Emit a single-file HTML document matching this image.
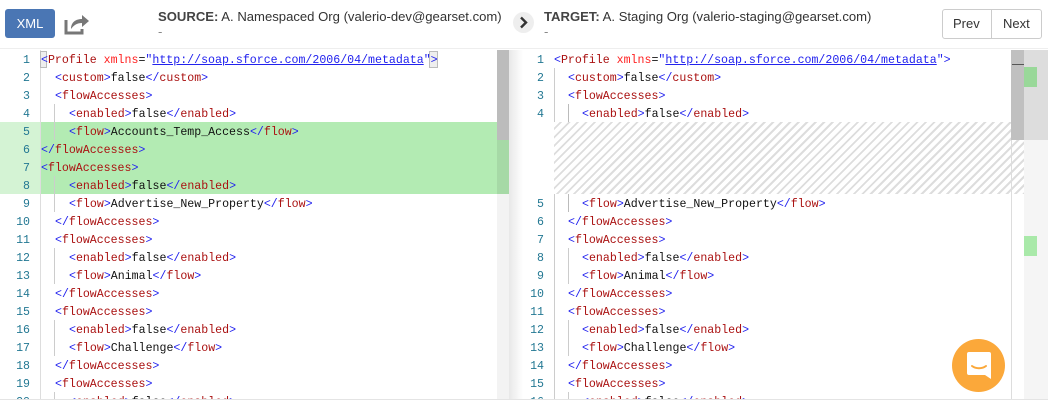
<!DOCTYPE html>
<html><head><meta charset="utf-8"><style>
*{margin:0;padding:0;box-sizing:border-box}
body{width:1048px;height:407px;overflow:hidden;background:#fff;font-family:"Liberation Sans",sans-serif;position:relative}
.abs{position:absolute}
.hdr{font-size:13.1px;color:#333}
.hdr b{color:#444}
.ln{position:absolute;height:18px;line-height:18px;padding-top:2px;font-family:"Liberation Mono",monospace;font-size:11.6px;white-space:pre;color:#111}
.num{position:absolute;width:30px;text-align:right;height:18px;line-height:18px;padding-top:2px;font-family:"Liberation Mono",monospace;font-size:11.6px;color:#237893}
.b{color:#2222ee}.t{color:#a11}.a{color:#f22}.s{color:#22e;text-decoration:underline}
.g{position:absolute;width:1px;background:#ccc}
</style></head><body>
<!-- header -->
<div class="abs" style="left:5px;top:9px;width:50px;height:29px;background:#4a76b4;border-radius:3px;color:#fff;font-size:13px;text-align:center;line-height:29px">XML</div>
<svg class="abs" style="left:64px;top:12px" width="26" height="24" viewBox="0 0 26 24"><path d="M2 8v13h16v-4" fill="none" stroke="#777" stroke-width="3"/><path d="M7 17c0-7 5-10 11-10V3l7 6-7 6v-4c-5 0-8 2-11 6z" fill="#777"/></svg>
<div class="abs hdr" style="left:158px;top:9px"><b>SOURCE:</b> A. Namespaced Org (valerio-dev@gearset.com)</div>
<div class="abs hdr" style="left:158px;top:24px;color:#888">-</div>
<div class="abs" style="left:513px;top:12px;width:21px;height:21px;border-radius:50%;background:#eee"></div>
<svg class="abs" style="left:518px;top:16px" width="12" height="13" viewBox="0 0 12 13"><path d="M3 1.5l5 5-5 5" fill="none" stroke="#333" stroke-width="2.4"/></svg>
<div class="abs hdr" style="left:544px;top:9px"><b>TARGET:</b> A. Staging Org (valerio-staging@gearset.com)</div>
<div class="abs hdr" style="left:544px;top:24px;color:#888">-</div>
<div class="abs" style="left:942px;top:9px;width:100px;height:30px;border:1px solid #ccc;border-radius:3px;font-size:13px;color:#333;line-height:28px">
<span class="abs" style="left:10px">Prev</span><span class="abs" style="left:48px;top:0;width:1px;height:28px;background:#ccc"></span><span class="abs" style="left:60px">Next</span></div>
<div class="abs" style="left:0;top:48px;width:1048px;height:1px;background:#eee"></div>
<!-- left pane -->
<div class="abs" style="left:0;top:122px;width:40px;height:72px;background:#d4f3d4"></div>
<div class="abs" style="left:40px;top:122px;width:470px;height:72px;background:#b3ebb3"></div>
<div class="g" style="left:40px;top:50px;height:349px;background:#ddd"></div>
<div class="abs" style="left:497px;top:50px;width:12px;height:72px;background:#f3f3f3"></div>
<div class="abs" style="left:497px;top:122px;width:12px;height:72px;background:#a6d9a6"></div>
<div class="abs" style="left:497px;top:194px;width:12px;height:205px;background:#f3f3f3"></div>
<div class="abs" style="left:497px;top:50px;width:12px;height:90px;background:#bcbcbc"></div>
<div class="abs" style="left:509px;top:50px;width:14px;height:349px;background:linear-gradient(90deg,#e8e8e8,#fff)"></div>
<div class="g" style="left:54px;top:104px;height:36px"></div>
<div class="g" style="left:54px;top:176px;height:36px"></div>
<div class="g" style="left:54px;top:248px;height:36px"></div>
<div class="g" style="left:54px;top:320px;height:36px"></div>
<div class="g" style="left:54px;top:392px;height:7px"></div>
<div class="abs" style="left:40px;top:51px;width:7px;height:17px;border:1px solid #bbb;background:#eee"></div>
<div class="abs" style="left:429px;top:51px;width:9px;height:17px;border:1px solid #bbb;background:#eee"></div>

<div class="num" style="left:0;top:50px">1</div><div class="ln" style="left:41px;top:50px"><span class="b">&lt;</span><span class="t">Profile</span> <span class="a">xmlns</span>=<span class="b">"</span><span class="s">http://soap.sforce.com/2006/04/metadata</span><span class="b">"&gt;</span></div>
<div class="num" style="left:0;top:68px">2</div><div class="ln" style="left:55px;top:68px"><span class="b">&lt;</span><span class="t">custom</span><span class="b">&gt;</span>false<span class="b">&lt;/</span><span class="t">custom</span><span class="b">&gt;</span></div>
<div class="num" style="left:0;top:86px">3</div><div class="ln" style="left:55px;top:86px"><span class="b">&lt;</span><span class="t">flowAccesses</span><span class="b">&gt;</span></div>
<div class="num" style="left:0;top:104px">4</div><div class="ln" style="left:69px;top:104px"><span class="b">&lt;</span><span class="t">enabled</span><span class="b">&gt;</span>false<span class="b">&lt;/</span><span class="t">enabled</span><span class="b">&gt;</span></div>
<div class="num" style="left:0;top:122px">5</div><div class="ln" style="left:69px;top:122px"><span class="b">&lt;</span><span class="t">flow</span><span class="b">&gt;</span>Accounts_Temp_Access<span class="b">&lt;/</span><span class="t">flow</span><span class="b">&gt;</span></div>
<div class="num" style="left:0;top:140px">6</div><div class="ln" style="left:41px;top:140px"><span class="b">&lt;/</span><span class="t">flowAccesses</span><span class="b">&gt;</span></div>
<div class="num" style="left:0;top:158px">7</div><div class="ln" style="left:41px;top:158px"><span class="b">&lt;</span><span class="t">flowAccesses</span><span class="b">&gt;</span></div>
<div class="num" style="left:0;top:176px">8</div><div class="ln" style="left:69px;top:176px"><span class="b">&lt;</span><span class="t">enabled</span><span class="b">&gt;</span>false<span class="b">&lt;/</span><span class="t">enabled</span><span class="b">&gt;</span></div>
<div class="num" style="left:0;top:194px">9</div><div class="ln" style="left:69px;top:194px"><span class="b">&lt;</span><span class="t">flow</span><span class="b">&gt;</span>Advertise_New_Property<span class="b">&lt;/</span><span class="t">flow</span><span class="b">&gt;</span></div>
<div class="num" style="left:0;top:212px">10</div><div class="ln" style="left:55px;top:212px"><span class="b">&lt;/</span><span class="t">flowAccesses</span><span class="b">&gt;</span></div>
<div class="num" style="left:0;top:230px">11</div><div class="ln" style="left:55px;top:230px"><span class="b">&lt;</span><span class="t">flowAccesses</span><span class="b">&gt;</span></div>
<div class="num" style="left:0;top:248px">12</div><div class="ln" style="left:69px;top:248px"><span class="b">&lt;</span><span class="t">enabled</span><span class="b">&gt;</span>false<span class="b">&lt;/</span><span class="t">enabled</span><span class="b">&gt;</span></div>
<div class="num" style="left:0;top:266px">13</div><div class="ln" style="left:69px;top:266px"><span class="b">&lt;</span><span class="t">flow</span><span class="b">&gt;</span>Animal<span class="b">&lt;/</span><span class="t">flow</span><span class="b">&gt;</span></div>
<div class="num" style="left:0;top:284px">14</div><div class="ln" style="left:55px;top:284px"><span class="b">&lt;/</span><span class="t">flowAccesses</span><span class="b">&gt;</span></div>
<div class="num" style="left:0;top:302px">15</div><div class="ln" style="left:55px;top:302px"><span class="b">&lt;</span><span class="t">flowAccesses</span><span class="b">&gt;</span></div>
<div class="num" style="left:0;top:320px">16</div><div class="ln" style="left:69px;top:320px"><span class="b">&lt;</span><span class="t">enabled</span><span class="b">&gt;</span>false<span class="b">&lt;/</span><span class="t">enabled</span><span class="b">&gt;</span></div>
<div class="num" style="left:0;top:338px">17</div><div class="ln" style="left:69px;top:338px"><span class="b">&lt;</span><span class="t">flow</span><span class="b">&gt;</span>Challenge<span class="b">&lt;/</span><span class="t">flow</span><span class="b">&gt;</span></div>
<div class="num" style="left:0;top:356px">18</div><div class="ln" style="left:55px;top:356px"><span class="b">&lt;/</span><span class="t">flowAccesses</span><span class="b">&gt;</span></div>
<div class="num" style="left:0;top:374px">19</div><div class="ln" style="left:55px;top:374px"><span class="b">&lt;</span><span class="t">flowAccesses</span><span class="b">&gt;</span></div>
<div class="num" style="left:0;top:392px">20</div><div class="ln" style="left:69px;top:392px"><span class="b">&lt;</span><span class="t">enabled</span><span class="b">&gt;</span>false<span class="b">&lt;/</span><span class="t">enabled</span><span class="b">&gt;</span></div>

<!-- right pane -->
<div class="abs" style="left:554px;top:122px;width:470px;height:72px;background:repeating-linear-gradient(135deg,#fff 0 4px,#ddd 4px 6px)"></div>
<div class="g" style="left:554px;top:68px;height:54px"></div>
<div class="g" style="left:554px;top:194px;height:205px"></div>
<div class="g" style="left:568px;top:104px;height:18px;background:#bbb"></div>
<div class="g" style="left:568px;top:194px;height:18px;background:#bbb"></div>
<div class="g" style="left:568px;top:248px;height:36px"></div>
<div class="g" style="left:568px;top:320px;height:36px"></div>
<div class="g" style="left:568px;top:392px;height:7px"></div>
<div class="abs" style="left:1011px;top:50px;width:1px;height:349px;background:#ddd"></div>
<div class="abs" style="left:1011px;top:50px;width:13px;height:90px;background:#c0c0c0"></div>
<div class="abs" style="left:1012px;top:64px;width:12px;height:1px;background:#555"></div>
<div class="abs" style="left:1024px;top:50px;width:24px;height:349px;background:#f5f5f5"></div>
<div class="abs" style="left:1024px;top:50px;width:24px;height:90px;background:#ddd"></div>
<div class="abs" style="left:1024px;top:67px;width:13px;height:20px;background:#99d899"></div>
<div class="abs" style="left:1024px;top:236px;width:13px;height:20px;background:#a9e9a9"></div>

<div class="num" style="left:514px;top:50px">1</div><div class="ln" style="left:554px;top:50px"><span class="b">&lt;</span><span class="t">Profile</span> <span class="a">xmlns</span>=<span class="b">"</span><span class="s">http://soap.sforce.com/2006/04/metadata</span><span class="b">"&gt;</span></div>
<div class="num" style="left:514px;top:68px">2</div><div class="ln" style="left:568px;top:68px"><span class="b">&lt;</span><span class="t">custom</span><span class="b">&gt;</span>false<span class="b">&lt;/</span><span class="t">custom</span><span class="b">&gt;</span></div>
<div class="num" style="left:514px;top:86px">3</div><div class="ln" style="left:568px;top:86px"><span class="b">&lt;</span><span class="t">flowAccesses</span><span class="b">&gt;</span></div>
<div class="num" style="left:514px;top:104px">4</div><div class="ln" style="left:582px;top:104px"><span class="b">&lt;</span><span class="t">enabled</span><span class="b">&gt;</span>false<span class="b">&lt;/</span><span class="t">enabled</span><span class="b">&gt;</span></div>
<div class="num" style="left:514px;top:194px">5</div><div class="ln" style="left:582px;top:194px"><span class="b">&lt;</span><span class="t">flow</span><span class="b">&gt;</span>Advertise_New_Property<span class="b">&lt;/</span><span class="t">flow</span><span class="b">&gt;</span></div>
<div class="num" style="left:514px;top:212px">6</div><div class="ln" style="left:568px;top:212px"><span class="b">&lt;/</span><span class="t">flowAccesses</span><span class="b">&gt;</span></div>
<div class="num" style="left:514px;top:230px">7</div><div class="ln" style="left:568px;top:230px"><span class="b">&lt;</span><span class="t">flowAccesses</span><span class="b">&gt;</span></div>
<div class="num" style="left:514px;top:248px">8</div><div class="ln" style="left:582px;top:248px"><span class="b">&lt;</span><span class="t">enabled</span><span class="b">&gt;</span>false<span class="b">&lt;/</span><span class="t">enabled</span><span class="b">&gt;</span></div>
<div class="num" style="left:514px;top:266px">9</div><div class="ln" style="left:582px;top:266px"><span class="b">&lt;</span><span class="t">flow</span><span class="b">&gt;</span>Animal<span class="b">&lt;/</span><span class="t">flow</span><span class="b">&gt;</span></div>
<div class="num" style="left:514px;top:284px">10</div><div class="ln" style="left:568px;top:284px"><span class="b">&lt;/</span><span class="t">flowAccesses</span><span class="b">&gt;</span></div>
<div class="num" style="left:514px;top:302px">11</div><div class="ln" style="left:568px;top:302px"><span class="b">&lt;</span><span class="t">flowAccesses</span><span class="b">&gt;</span></div>
<div class="num" style="left:514px;top:320px">12</div><div class="ln" style="left:582px;top:320px"><span class="b">&lt;</span><span class="t">enabled</span><span class="b">&gt;</span>false<span class="b">&lt;/</span><span class="t">enabled</span><span class="b">&gt;</span></div>
<div class="num" style="left:514px;top:338px">13</div><div class="ln" style="left:582px;top:338px"><span class="b">&lt;</span><span class="t">flow</span><span class="b">&gt;</span>Challenge<span class="b">&lt;/</span><span class="t">flow</span><span class="b">&gt;</span></div>
<div class="num" style="left:514px;top:356px">14</div><div class="ln" style="left:568px;top:356px"><span class="b">&lt;/</span><span class="t">flowAccesses</span><span class="b">&gt;</span></div>
<div class="num" style="left:514px;top:374px">15</div><div class="ln" style="left:568px;top:374px"><span class="b">&lt;</span><span class="t">flowAccesses</span><span class="b">&gt;</span></div>
<div class="num" style="left:514px;top:392px">16</div><div class="ln" style="left:582px;top:392px"><span class="b">&lt;</span><span class="t">enabled</span><span class="b">&gt;</span>false<span class="b">&lt;/</span><span class="t">enabled</span><span class="b">&gt;</span></div>

<!-- bottom -->
<div class="abs" style="left:0;top:399px;width:1048px;height:8px;background:#fff;border-top:1px solid #e4e4e4"></div>
<!-- chat bubble -->
<div class="abs" style="left:952px;top:339px;width:53px;height:53px;border-radius:50%;background:#fba83a"></div>
<svg class="abs" style="left:966px;top:351px" width="26" height="30" viewBox="0 0 26 30"><path d="M3 1h20a2 2 0 0 1 2 2v25l-6-4H3a2 2 0 0 1-2-2V3a2 2 0 0 1 2-2z" fill="#fff"/><path d="M6 15c4 3 10 3 14 0" fill="none" stroke="#fba83a" stroke-width="2" stroke-linecap="round"/></svg>
</body></html>
